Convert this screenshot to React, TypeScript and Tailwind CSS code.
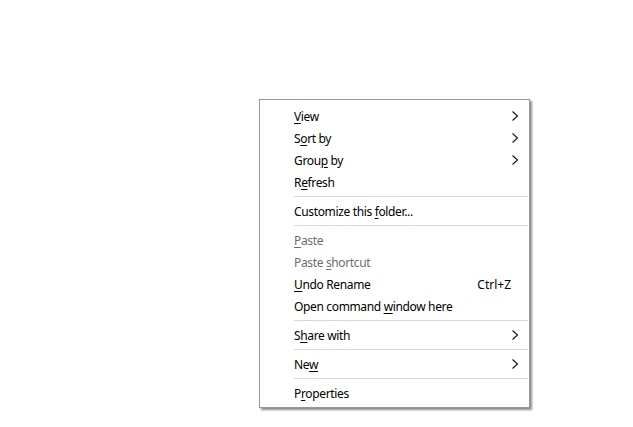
import React from 'react';

type Entry =
  | { kind: 'item'; before: string; key: string; after: string; disabled?: boolean; sub?: boolean; shortcut?: string }
  | { kind: 'sep' };

const entries: Entry[] = [
  { kind: 'item', before: '', key: 'V', after: 'iew', sub: true },
  { kind: 'item', before: 'S', key: 'o', after: 'rt by', sub: true },
  { kind: 'item', before: 'Grou', key: 'p', after: ' by', sub: true },
  { kind: 'item', before: 'R', key: 'e', after: 'fresh' },
  { kind: 'sep' },
  { kind: 'item', before: 'Customize this ', key: 'f', after: 'older...' },
  { kind: 'sep' },
  { kind: 'item', before: '', key: 'P', after: 'aste', disabled: true },
  { kind: 'item', before: 'Paste ', key: 's', after: 'hortcut', disabled: true },
  { kind: 'item', before: '', key: 'U', after: 'ndo Rename', shortcut: 'Ctrl+Z' },
  { kind: 'item', before: 'Open command ', key: 'w', after: 'indow here' },
  { kind: 'sep' },
  { kind: 'item', before: 'S', key: 'h', after: 'are with', sub: true },
  { kind: 'sep' },
  { kind: 'item', before: 'Ne', key: 'w', after: '', sub: true },
  { kind: 'sep' },
  { kind: 'item', before: 'P', key: 'r', after: 'operties' },
];

const Chevron = () => (
  <svg width="7" height="10" viewBox="0 0 7 10">
    <polyline points="0.5,0.5 5.5,5 0.5,9.5" fill="none" stroke="#111122" strokeWidth="1.1" />
  </svg>
);

export default function App() {
  return (
    <div className="relative w-[633px] h-[427px] bg-white overflow-hidden font-['Noto_Sans','Open_Sans',sans-serif] text-[12px] tracking-[-0.35px]">
      {/* context menu */}
      <div className="absolute left-[259px] top-[99px] w-[271px] border border-[#979797] bg-white py-[4px] shadow-[2px_2px_2px_rgba(0,0,0,0.45)]">
        {entries.map((e, i) =>
          e.kind === 'sep' ? (
            <div key={i} className="h-[7px] pt-[4px] pl-[34px] pr-[1px]">
              <div className="h-px bg-[#d7d7d7]" />
            </div>
          ) : (
            <div
              key={i}
              className={`relative flex h-[22px] items-center pt-[4px] pl-[34px] leading-none ${e.disabled ? 'text-[#6d6d6d]' : 'text-black'}`}
            >
              <span className="flex-1 whitespace-pre">
                {e.before}
                <span className="underline decoration-1 underline-offset-[2px]">{e.key}</span>
                {e.after}
              </span>
              {e.shortcut && <span className="pr-[18px] tracking-normal">{e.shortcut}</span>}
              {e.sub && (
                <span className="absolute right-[10px] top-[7px] flex">
                  <Chevron />
                </span>
              )}
            </div>
          )
        )}
      </div>
    </div>
  );
}
